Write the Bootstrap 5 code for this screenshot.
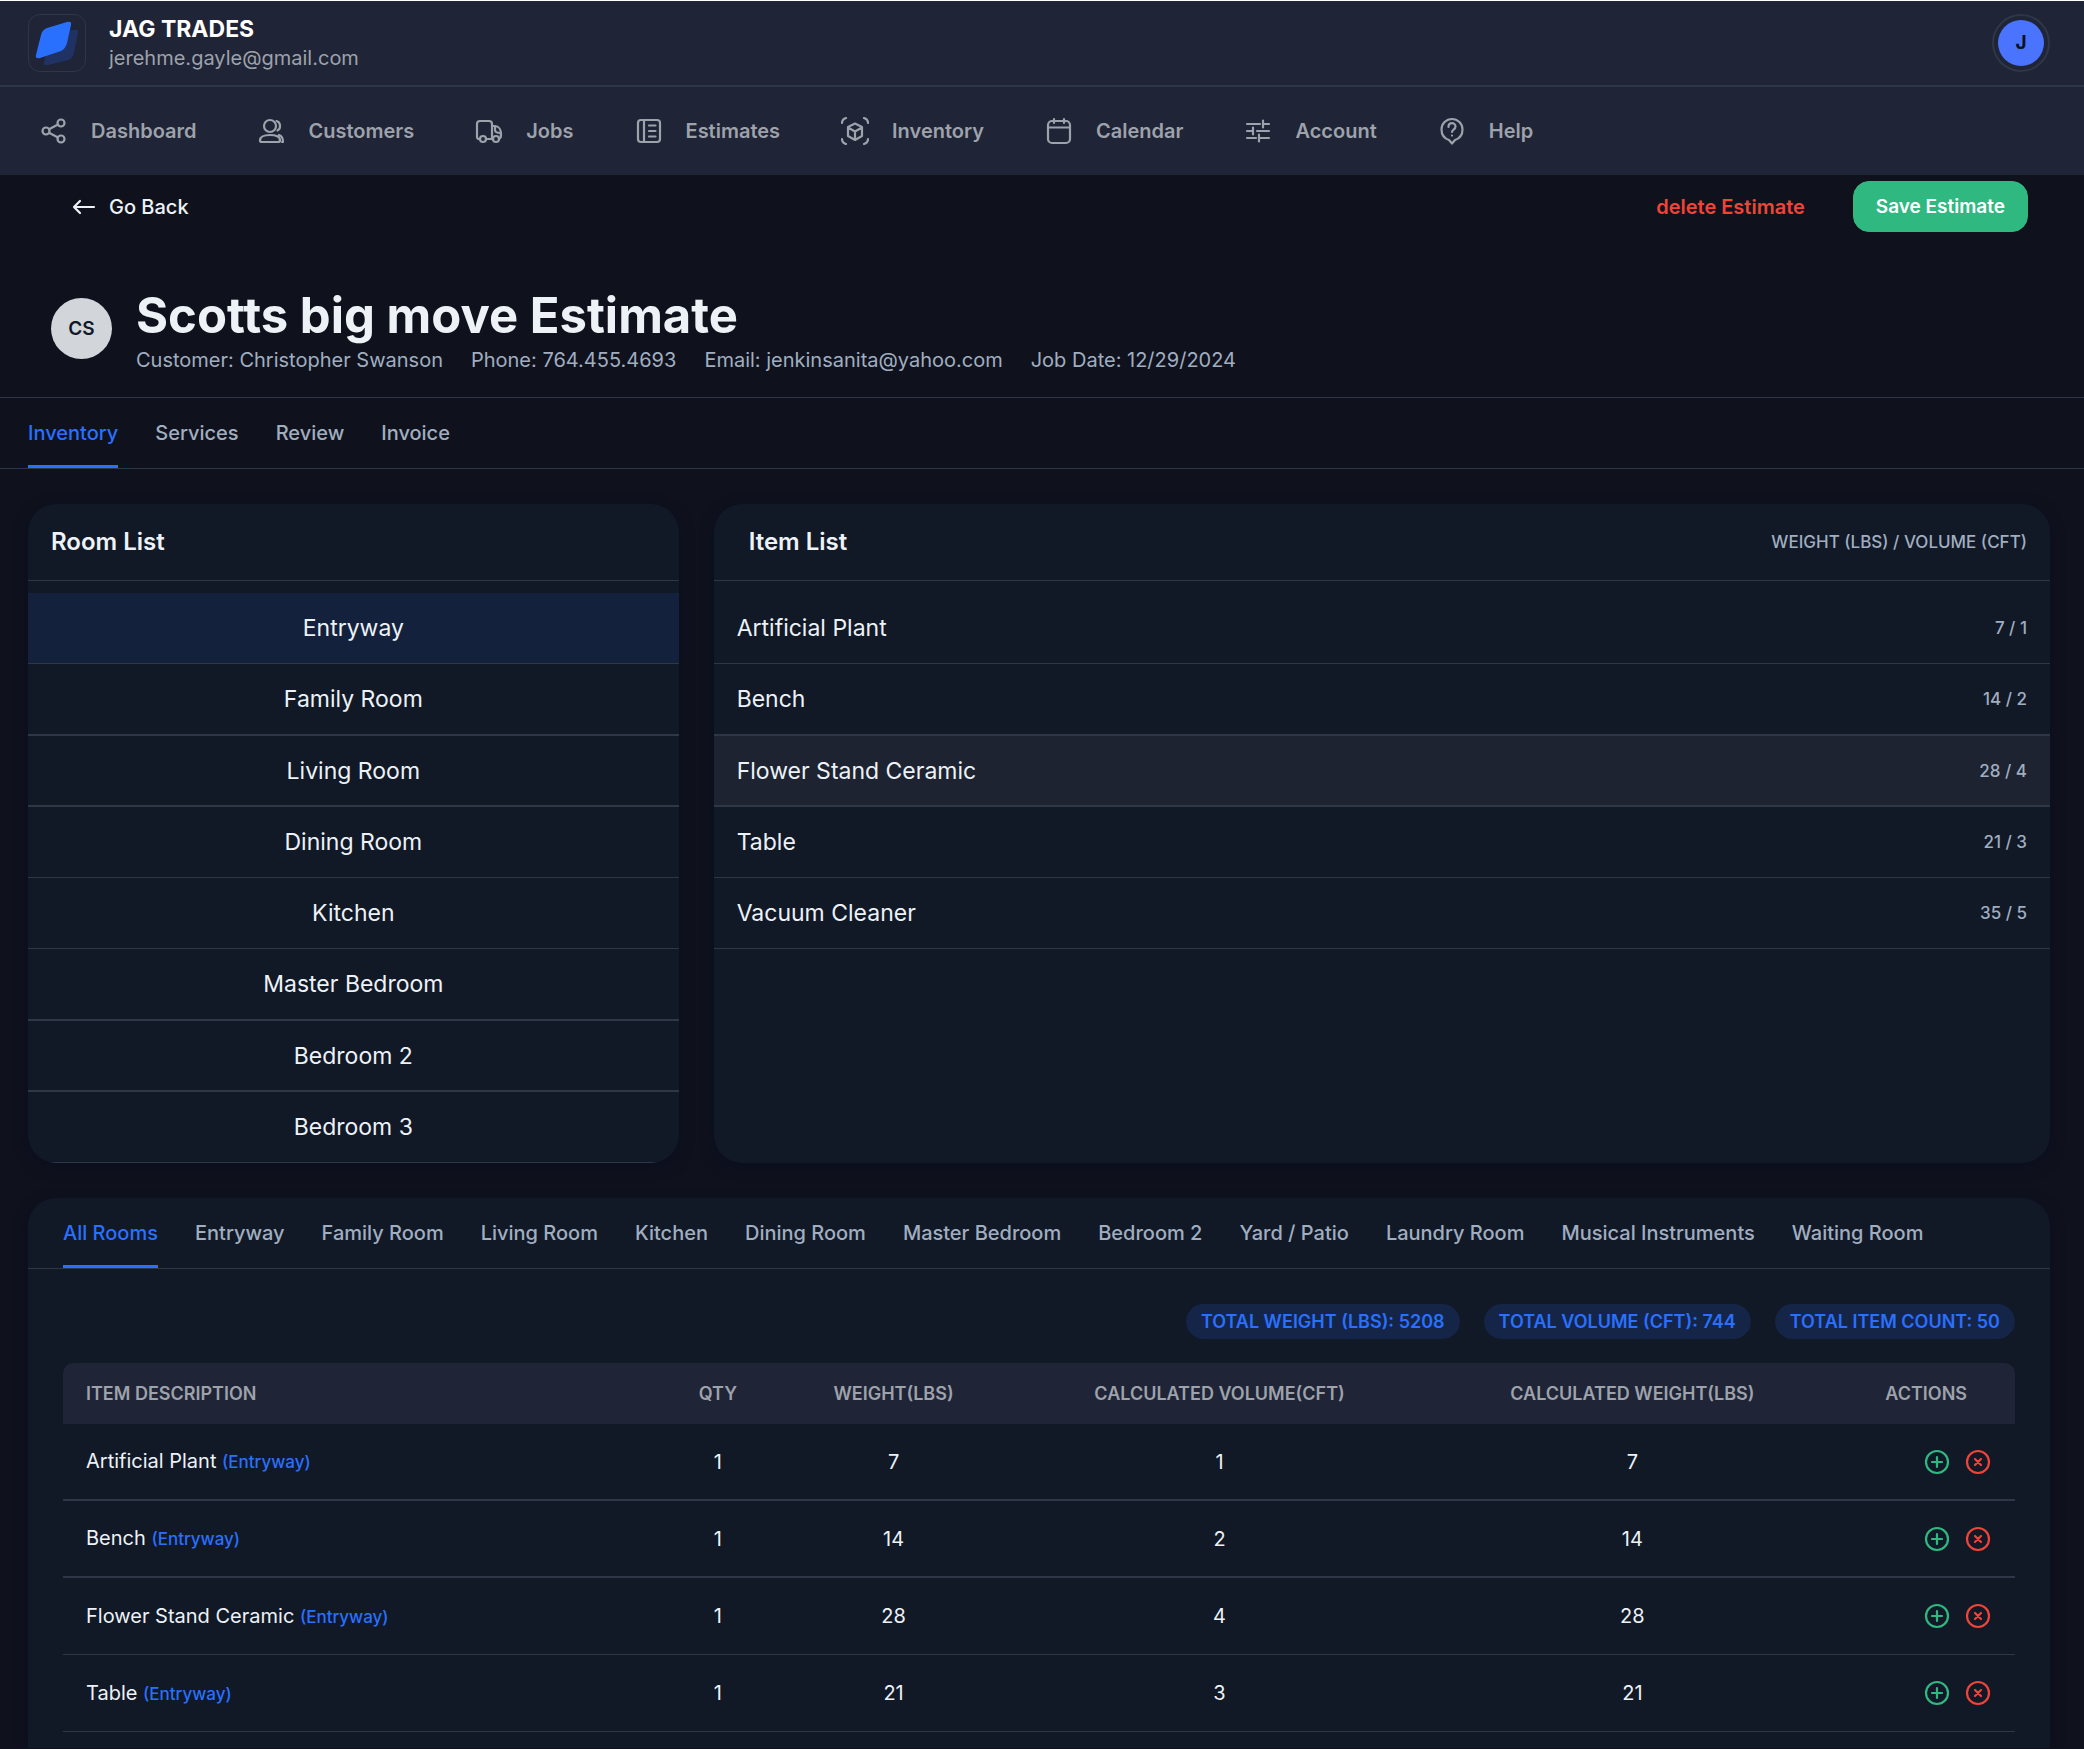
<!DOCTYPE html>
<html lang="en">
<head>
<meta charset="utf-8">
<meta name="viewport" content="width=device-width, initial-scale=1">
<title>Scotts big move Estimate</title>
<link href="https://cdn.jsdelivr.net/npm/bootstrap@5.3.0/dist/css/bootstrap.min.css" rel="stylesheet">
<style>
:root{--page:#0f121d;--panel:#111826;--bar:#1f2436;--line:#2d3748;--ink:#edf2f7;--soft:#a0aec0;--nav:#9da2ab;--blue:#2970ff;--green:#2fb981;--red:#f04438}
body{background:var(--page);color:var(--ink);font-family:Inter,"Liberation Sans",sans-serif;font-size:20px;line-height:28px;border-top:1px solid #fff}
a{text-decoration:none}
svg{display:block;flex:none}
.icon{width:28px;height:28px;fill:none;stroke:currentColor;stroke-width:2.2;stroke-linecap:round;stroke-linejoin:round}
.topbar{background:var(--bar);border-bottom:2px solid var(--line);padding:13px 34px 13px 28px}
.logo-box{width:58px;height:58px;border:1px solid var(--line);border-radius:12px}
.ident{gap:23px}
.brand{font-size:23px;font-weight:700;color:#fff;line-height:30px}
.brand-mail{color:var(--nav)}
.user-btn{width:58px;height:58px;padding:4px;border:2px solid var(--line);border-radius:50%;background:none}
.user-btn span{display:flex;align-items:center;justify-content:center;width:46px;height:46px;margin:auto;border-radius:50%;background:#4a74fd;color:#0b1020;font-size:19px;font-weight:700}
.mainnav{background:var(--bar);padding:30px 40px;gap:61px}
.mainnav a{color:var(--nav);font-weight:600;gap:23px}
.actions{padding:6px 56px 0 69px;min-height:57px}
.action-btns{gap:48px}
.back{color:var(--ink);font-weight:500;gap:12px}
.del{background:none;border:0;padding:0;color:var(--red);font-weight:600}
.save{background:var(--green);color:#fff;font-size:19px;font-weight:600;border-radius:16px;padding:11px 22px;line-height:27px;border:1px solid var(--green)}
.titlebar{padding:54px 51px 23px;gap:24px;border-bottom:1px solid var(--line)}
.initials{width:61px;height:61px;border-radius:50%;background:#d2d6db;color:#111827;font-size:19px;font-weight:600;flex:none;margin-top:12px}
.titlebar h1{font-size:49px;font-weight:700;line-height:60px;margin:0;color:var(--ink)}
.facts{gap:0 28px;color:var(--soft)}
.tabs{gap:0 37px;border-bottom:1px solid var(--line);font-weight:500}
.tabs button{background:none;border:0;border-bottom:3px solid transparent;padding:21px 0 18px;color:var(--soft);font-weight:500;line-height:28px;white-space:nowrap}
.tabs button.active{color:var(--blue);border-color:var(--blue)}
.page-tabs{padding:0 28px}
.work{padding:35px 34px 0 28px;gap:35px}
.lists{display:grid;grid-template-columns:repeat(12,minmax(0,1fr));gap:35px}
.panel{background:var(--panel);border-radius:28px;overflow:hidden;box-shadow:0 4px 14px rgba(8,9,32,.5)}
.rooms{grid-column:span 4}
.items{grid-column:span 8}
.panel-top{height:77px;border-bottom:1px solid var(--line);padding:0 23px}
.panel-top h2{font-size:24px;font-weight:600;line-height:28px;margin:0;color:var(--ink)}
.items h2{padding-left:12px}
.caps{font-size:17px;font-weight:500;color:var(--soft)}
.rowlist{padding-top:12px}
.rowlist button{display:flex;align-items:center;justify-content:space-between;width:100%;height:71px;padding:0 23px;background:none;border:0;border-bottom:1px solid var(--line);color:var(--ink);font-size:23px}
.rowlist button:nth-child(4n+2){height:72px;border-bottom-width:2px}
.rowlist button:nth-child(4n+3){border-bottom-width:2px}
.rooms .rowlist button{justify-content:center}
.rowlist button.active{background:#14213c}
.rowlist button.hovered{background:#1d2330}
.rowlist small{font-size:17px;font-weight:500;color:var(--soft)}
.summary{border-radius:28px 28px 0 0}
.summary .tabs{padding:0 35px}
.summary-body{padding:35px 35px 0}
.totals{gap:24px;margin-bottom:24px}
.pill{background:#152548;color:var(--blue);border-radius:18px;font-size:18px;font-weight:600;line-height:35px;padding:0 15px}
.grid{width:100%;table-layout:fixed;border-collapse:separate;border-spacing:0}
.grid th{background:var(--bar);color:var(--nav);font-size:18px;font-weight:600;height:61px;padding:0 23px;text-align:center}
.grid th:first-child{border-top-left-radius:10px;text-align:left}
.grid th:last-child{border-top-right-radius:10px}
.grid td{height:77px;padding:0 23px;text-align:center;border-bottom:1px solid var(--line)}
.grid tr:nth-child(-n+2) td{border-bottom-width:2px}
.grid td:first-child{text-align:left}
.room{color:var(--blue);font-size:17px;font-weight:500}
.acts{gap:13px}
.act{background:none;border:0;padding:0}
.act.add{color:var(--green)}
.act.rem{color:var(--red)}
</style>
</head>
<body>
<div class="d-flex flex-column">
<header>
  <div class="topbar d-flex align-items-center justify-content-between">
    <div class="ident d-flex align-items-center">
      <a href="#" class="logo-box" aria-label="JAG Trades home">
        <svg width="56" height="56" viewBox="0 0 56 56"><path d="M22 20 Q23 17 26 16 L46 15 Q50 14 49 18 L45 38 Q44 43 40 45 L19 50 Q14 51 15 47Z" fill="#1f3263"/><path d="M12 20 Q13 15 18 13 L38 7 Q43 6 42 10 L38 28 Q37 33 32 36 L11 43 Q6 44 7 40Z" fill="#2970ff"/></svg>
      </a>
      <div>
        <div class="brand">JAG TRADES</div>
        <div class="brand-mail">jerehme.gayle@gmail.com</div>
      </div>
    </div>
    <button class="user-btn" aria-label="Account menu"><span>J</span></button>
  </div>
  <nav class="mainnav d-flex flex-wrap">
    <a href="#" class="d-flex align-items-center"><svg class="icon" viewBox="0 0 28 28"><circle cx="6" cy="14" r="3.500"/><circle cx="21" cy="6" r="3.500"/><circle cx="21" cy="22" r="3.500"/><path d="M9.500 12 18 7.500M9.500 16 18 20.500"/></svg>Dashboard</a>
    <a href="#" class="d-flex align-items-center"><svg class="icon" viewBox="0 0 28 28"><circle cx="13" cy="9" r="6"/><path d="M19.500 4c4.500 1 4.500 8 1 9.500M3 23.500c0-4 4-5.500 10-5.500s10 1.500 10 5.500c0 1.500-1 1.500-2 1.500H5c-1 0-2 0-2-1.500zM22 18c3 1 4 3.500 4 7h-1"/></svg>Customers</a>
    <a href="#" class="d-flex align-items-center"><svg class="icon" viewBox="0 0 28 28"><path d="M4 22a2 2 0 0 1-2-2V7a3 3 0 0 1 3-3h9a3 3 0 0 1 3 3v14M17 9h3c4 0 6 4 6 8 0 3 0 4-2 5M17 22h1M12 22h5M20 10v3c0 2 2 3 5.500 3"/><circle cx="8" cy="22" r="3"/><circle cx="21" cy="22" r="3"/></svg>Jobs</a>
    <a href="#" class="d-flex align-items-center"><svg class="icon" viewBox="0 0 28 28"><rect x="3" y="3" width="22" height="22" rx="3"/><path d="M9 3v22M14 8.500h6.500M14 14h6.500M14 19.500h6.500"/></svg>Estimates</a>
    <a href="#" class="d-flex align-items-center"><svg class="icon" viewBox="0 0 28 28"><path d="M14 6.500 21 10v9l-7 4-7-4v-9zM7 10.500l7 4 7-4M14 14.500V23M1 6c0-3 1-4 4-5M23 1c3 1 4 2 4 5M1 22c0 3 1 4 4 5M23 27c3-1 4-2 4-5"/></svg>Inventory</a>
    <a href="#" class="d-flex align-items-center"><svg class="icon" viewBox="0 0 28 28"><rect x="3" y="4" width="22" height="22" rx="4"/><path d="M3 10.500h22M9 2v4M19 2v4"/></svg>Calendar</a>
    <a href="#" class="d-flex align-items-center"><svg class="icon" viewBox="0 0 28 28"><path d="M3 7h13M19 3.500v7M19 7h6M3 14h6M9 10.500v7M13 14h12M3 21h9M15 17.500v7M15 21h10"/></svg>Account</a>
    <a href="#" class="d-flex align-items-center"><svg class="icon" viewBox="0 0 28 28"><path d="M14 2a10.500 10.500 0 0 1 10.500 10.500c0 5-3 9-7.500 10.500L14 26.500 11 23c-4.500-1.500-7.500-5.500-7.500-10.500A10.500 10.500 0 0 1 14 2z"/><path d="M10.500 10c0-5 7-5 7-.5 0 3-3.500 3-3.500 5.500M14 18.500v.1"/></svg>Help</a>
  </nav>
</header>
<div class="actions d-flex align-items-center justify-content-between">
  <a href="#" class="back d-flex align-items-center"><svg class="icon" viewBox="0 0 28 28"><path d="M25 14H5M11 8l-6 6 6 6"/></svg>Go Back</a>
  <div class="action-btns d-flex align-items-center">
    <button class="del">delete Estimate</button>
    <button class="save">Save Estimate</button>
  </div>
</div>
<section class="titlebar d-flex align-items-start">
  <div class="initials d-flex align-items-center justify-content-center">CS</div>
  <div>
    <h1>Scotts big move Estimate</h1>
    <div class="facts d-flex flex-wrap"><span>Customer: Christopher Swanson</span><span>Phone: 764.455.4693</span><span>Email: jenkinsanita@yahoo.com</span><span>Job Date: 12/29/2024</span></div>
  </div>
</section>
<div class="tabs page-tabs d-flex" role="tablist">
  <button class="active" role="tab">Inventory</button><button role="tab">Services</button><button role="tab">Review</button><button role="tab">Invoice</button>
</div>
<main class="work d-flex flex-column">
  <div class="lists">
    <section class="panel rooms">
      <div class="panel-top d-flex align-items-center"><h2>Room List</h2></div>
      <div class="rowlist">
        <button class="active">Entryway</button><button>Family Room</button><button>Living Room</button><button>Dining Room</button><button>Kitchen</button><button>Master Bedroom</button><button>Bedroom 2</button><button>Bedroom 3</button>
      </div>
    </section>
    <section class="panel items">
      <div class="panel-top d-flex align-items-center justify-content-between"><h2>Item List</h2><span class="caps">WEIGHT (LBS) / VOLUME (CFT)</span></div>
      <div class="rowlist">
        <button>Artificial Plant<small>7 / 1</small></button>
        <button>Bench<small>14 / 2</small></button>
        <button class="hovered">Flower Stand Ceramic<small>28 / 4</small></button>
        <button>Table<small>21 / 3</small></button>
        <button>Vacuum Cleaner<small>35 / 5</small></button>
      </div>
    </section>
  </div>
  <section class="panel summary">
    <div class="tabs d-flex flex-wrap" role="tablist">
      <button class="active" role="tab">All Rooms</button><button role="tab">Entryway</button><button role="tab">Family Room</button><button role="tab">Living Room</button><button role="tab">Kitchen</button><button role="tab">Dining Room</button><button role="tab">Master Bedroom</button><button role="tab">Bedroom 2</button><button role="tab">Yard / Patio</button><button role="tab">Laundry Room</button><button role="tab">Musical Instruments</button><button role="tab">Waiting Room</button>
    </div>
    <div class="summary-body pb-3">
      <div class="totals d-flex flex-wrap justify-content-end"><span class="pill">TOTAL WEIGHT (LBS): 5208</span><span class="pill">TOTAL VOLUME (CFT): 744</span><span class="pill">TOTAL ITEM COUNT: 50</span></div>
      <table class="grid">
        <colgroup><col style="width:30.6%"><col style="width:5.9%"><col style="width:12.1%"><col style="width:21.3%"><col style="width:21%"><col style="width:9.1%"></colgroup>
        <thead><tr><th>ITEM DESCRIPTION</th><th>QTY</th><th>WEIGHT(LBS)</th><th>CALCULATED VOLUME(CFT)</th><th>CALCULATED WEIGHT(LBS)</th><th>ACTIONS</th></tr></thead>
        <tbody>
          <tr><td>Artificial Plant <span class="room">(Entryway)</span></td><td>1</td><td>7</td><td>1</td><td>7</td><td><div class="acts d-flex justify-content-end"><button class="act add" aria-label="Add"><svg class="icon" viewBox="0 0 28 28"><circle cx="14" cy="14" r="11"/><path d="M14 9v10M9 14h10"/></svg></button><button class="act rem" aria-label="Remove"><svg class="icon" viewBox="0 0 28 28"><circle cx="14" cy="14" r="11"/><path d="m11 11 6 6M17 11l-6 6"/></svg></button></div></td></tr>
          <tr><td>Bench <span class="room">(Entryway)</span></td><td>1</td><td>14</td><td>2</td><td>14</td><td><div class="acts d-flex justify-content-end"><button class="act add" aria-label="Add"><svg class="icon" viewBox="0 0 28 28"><circle cx="14" cy="14" r="11"/><path d="M14 9v10M9 14h10"/></svg></button><button class="act rem" aria-label="Remove"><svg class="icon" viewBox="0 0 28 28"><circle cx="14" cy="14" r="11"/><path d="m11 11 6 6M17 11l-6 6"/></svg></button></div></td></tr>
          <tr><td>Flower Stand Ceramic <span class="room">(Entryway)</span></td><td>1</td><td>28</td><td>4</td><td>28</td><td><div class="acts d-flex justify-content-end"><button class="act add" aria-label="Add"><svg class="icon" viewBox="0 0 28 28"><circle cx="14" cy="14" r="11"/><path d="M14 9v10M9 14h10"/></svg></button><button class="act rem" aria-label="Remove"><svg class="icon" viewBox="0 0 28 28"><circle cx="14" cy="14" r="11"/><path d="m11 11 6 6M17 11l-6 6"/></svg></button></div></td></tr>
          <tr><td>Table <span class="room">(Entryway)</span></td><td>1</td><td>21</td><td>3</td><td>21</td><td><div class="acts d-flex justify-content-end"><button class="act add" aria-label="Add"><svg class="icon" viewBox="0 0 28 28"><circle cx="14" cy="14" r="11"/><path d="M14 9v10M9 14h10"/></svg></button><button class="act rem" aria-label="Remove"><svg class="icon" viewBox="0 0 28 28"><circle cx="14" cy="14" r="11"/><path d="m11 11 6 6M17 11l-6 6"/></svg></button></div></td></tr>
        </tbody>
      </table>
    </div>
  </section>
</main>
</div>
<script src="https://cdn.jsdelivr.net/npm/bootstrap@5.3.0/dist/js/bootstrap.bundle.min.js"></script>
</body>
</html>
